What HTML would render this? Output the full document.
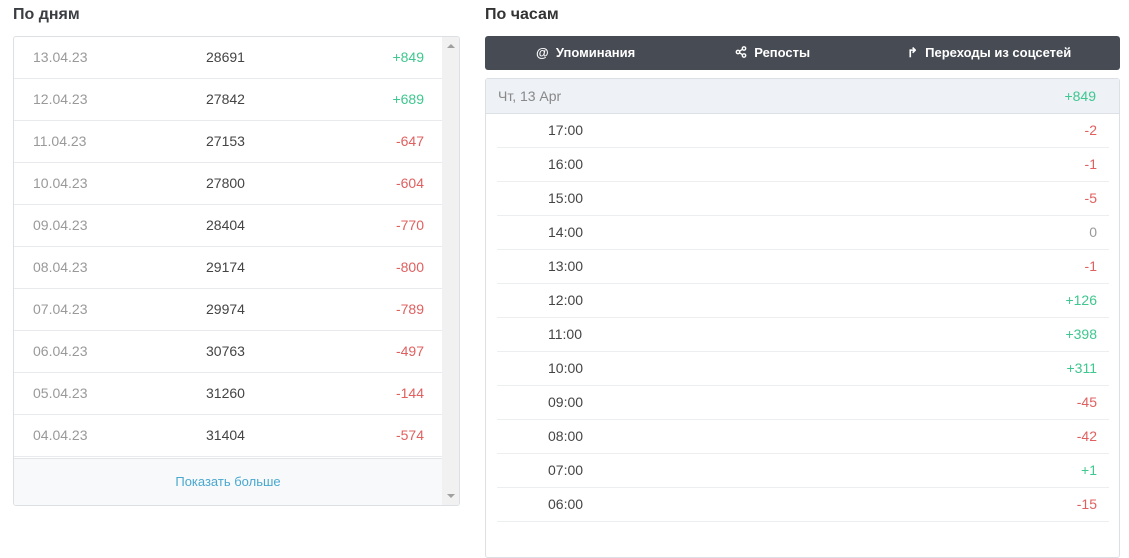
<!DOCTYPE html>
<html><head><meta charset="utf-8"><style>
*{box-sizing:border-box;margin:0;padding:0}
body{width:1129px;height:525px;overflow:hidden;background:#fff;font-family:"Liberation Sans",sans-serif;font-size:14px;position:relative}
.t{position:absolute;font-size:16px;font-weight:bold;color:#3a3d42}
.box{position:absolute;left:13px;top:36px;width:447px;height:470px;border:1px solid #dcdfe3;border-radius:3px;background:#fff;overflow:hidden}
.row{position:absolute;left:0;width:428px;height:42px;border-bottom:1px solid #e8eaed;line-height:41px}
.row span{position:absolute}
.d{left:19px;color:#999}
.n{left:192px;color:#444}
.v{right:18px}
.g{color:#3ec78f}.r{color:#e06060}.z{color:#999}
.sb{position:absolute;right:0;top:0;width:17px;height:100%;background:#f1f1f1}
.foot{position:absolute;left:0;top:421px;width:428px;height:48px;background:#f7f9fa;border-top:1px solid #e3e6e9;text-align:center;line-height:46px;color:#4aa8cf;font-size:13px}
.bar{position:absolute;left:485px;top:36px;width:635px;height:34px;background:#474b54;border-radius:3px;color:#fff;font-size:13px;font-weight:bold;line-height:34px}
.bar span{position:absolute}
.rb{position:absolute;left:485px;top:78px;width:635px;height:480px;border:1px solid #dcdfe3;border-radius:3px;background:#fff}
.hd{position:absolute;left:0;top:0;width:633px;height:35px;background:#eef1f6;border-bottom:1px solid #dde1e6;line-height:34px}
.h{position:absolute;left:11px;width:612px;height:34px;border-bottom:1px solid #eceef0;line-height:33px}
.h span{position:absolute}
.hh{left:51px;color:#444}
.hv{right:12px}
</style></head><body>
<div class="t" style="left:13px;top:6px">По дням</div>
<div class="t" style="left:485px;top:6px;color:#333">По часам</div>
<div class="box">
<div class="row" style="top:0"><span class="d">13.04.23</span><span class="n">28691</span><span class="v g">+849</span></div>
<div class="row" style="top:42px"><span class="d">12.04.23</span><span class="n">27842</span><span class="v g">+689</span></div>
<div class="row" style="top:84px"><span class="d">11.04.23</span><span class="n">27153</span><span class="v r">-647</span></div>
<div class="row" style="top:126px"><span class="d">10.04.23</span><span class="n">27800</span><span class="v r">-604</span></div>
<div class="row" style="top:168px"><span class="d">09.04.23</span><span class="n">28404</span><span class="v r">-770</span></div>
<div class="row" style="top:210px"><span class="d">08.04.23</span><span class="n">29174</span><span class="v r">-800</span></div>
<div class="row" style="top:252px"><span class="d">07.04.23</span><span class="n">29974</span><span class="v r">-789</span></div>
<div class="row" style="top:294px"><span class="d">06.04.23</span><span class="n">30763</span><span class="v r">-497</span></div>
<div class="row" style="top:336px"><span class="d">05.04.23</span><span class="n">31260</span><span class="v r">-144</span></div>
<div class="row" style="top:378px"><span class="d">04.04.23</span><span class="n">31404</span><span class="v r">-574</span></div>
<div class="foot">Показать больше</div>
<div class="sb"><div style="position:absolute;left:5px;top:7px;border:4px solid transparent;border-bottom:4px solid #a0a0a0;border-top:0"></div><div style="position:absolute;left:5px;bottom:7px;border:4px solid transparent;border-top:4px solid #a0a0a0;border-bottom:0"></div></div>
</div>
<div class="bar"><span style="left:51px">@&nbsp; Упоминания</span><span style="left:250px"><svg width="12" height="12" viewBox="0 0 12 12" style="vertical-align:-1px" fill="none" stroke="#fff" stroke-width="1.4"><circle cx="9" cy="2.5" r="1.7"/><circle cx="3" cy="6" r="1.7"/><circle cx="9" cy="9.5" r="1.7"/><path d="M4.5 5.2L7.5 3.3M4.5 6.8L7.5 8.7"/></svg>&nbsp; Репосты</span><span style="left:422px">&#x21B1;&nbsp; Переходы из соцсетей</span></div>
<div class="rb">
<div class="hd"><span style="position:absolute;left:12px;color:#888">Чт, 13 Apr</span><span style="position:absolute;right:23px" class="g">+849</span></div>
<div class="h" style="top:35px"><span class="hh">17:00</span><span class="hv r">-2</span></div>
<div class="h" style="top:69px"><span class="hh">16:00</span><span class="hv r">-1</span></div>
<div class="h" style="top:103px"><span class="hh">15:00</span><span class="hv r">-5</span></div>
<div class="h" style="top:137px"><span class="hh">14:00</span><span class="hv z">0</span></div>
<div class="h" style="top:171px"><span class="hh">13:00</span><span class="hv r">-1</span></div>
<div class="h" style="top:205px"><span class="hh">12:00</span><span class="hv g">+126</span></div>
<div class="h" style="top:239px"><span class="hh">11:00</span><span class="hv g">+398</span></div>
<div class="h" style="top:273px"><span class="hh">10:00</span><span class="hv g">+311</span></div>
<div class="h" style="top:307px"><span class="hh">09:00</span><span class="hv r">-45</span></div>
<div class="h" style="top:341px"><span class="hh">08:00</span><span class="hv r">-42</span></div>
<div class="h" style="top:375px"><span class="hh">07:00</span><span class="hv g">+1</span></div>
<div class="h" style="top:409px"><span class="hh">06:00</span><span class="hv r">-15</span></div>
</div>
</body></html>
